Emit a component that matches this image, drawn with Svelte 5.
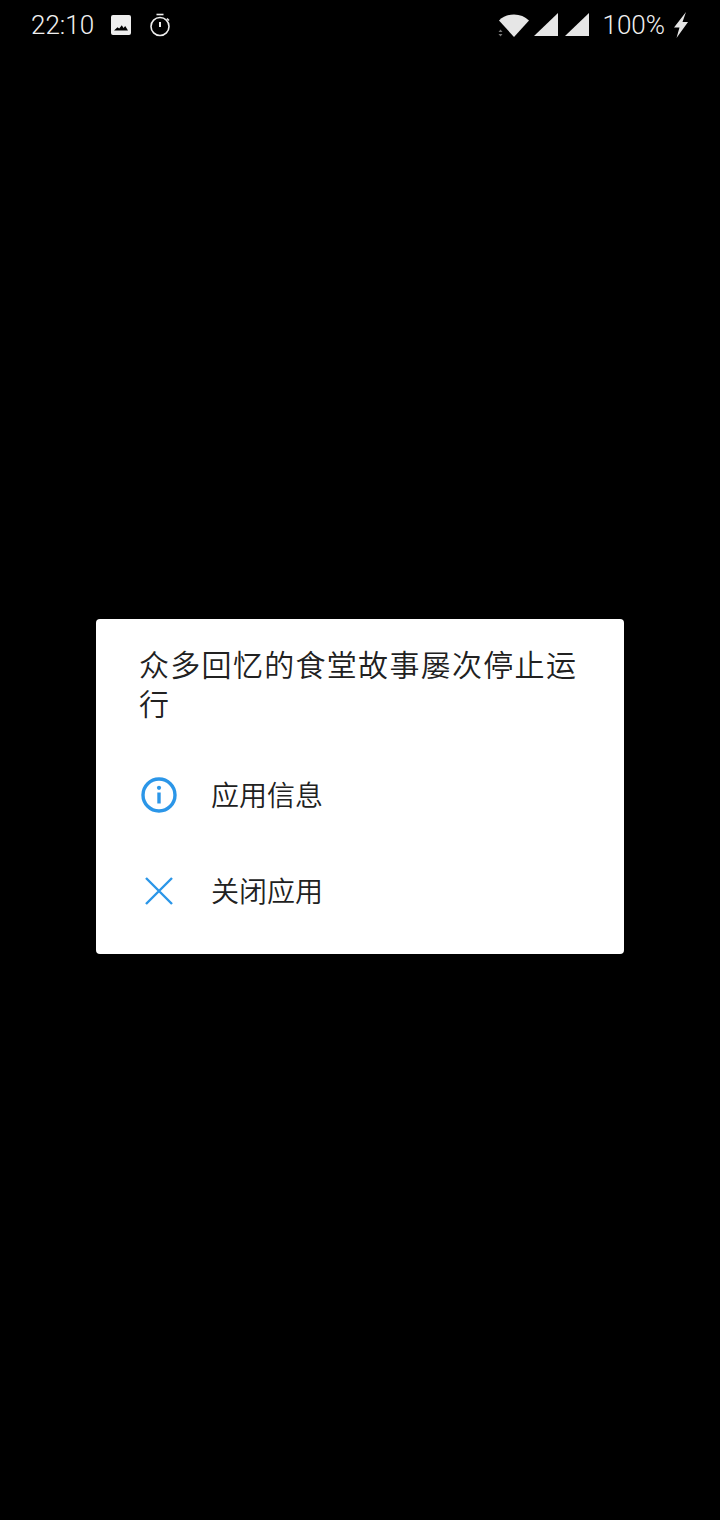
<script>
  const actions = [
    { id: "info", label: "应用信息" },
    { id: "close", label: "关闭应用" },
  ];
</script>

<div class="page">
  <header class="status">
    <span class="time">22:10</span>
    <svg class="ic-image" viewBox="0 0 20 20" width="20" height="20">
      <path fill="#eeeeee" fill-rule="evenodd" d="M2 0h16a2 2 0 0 1 2 2v16a2 2 0 0 1-2 2H2a2 2 0 0 1-2-2V2a2 2 0 0 1 2-2zM3 15.500h14l-2.800-4.500-1.700 2-1.700-2.800-2.600 3.300-1.700-1.300z" />
    </svg>
    <svg class="ic-timer" viewBox="0 0 22 24" width="22" height="24">
      <circle cx="11" cy="13.500" r="9" fill="none" stroke="#eeeeee" stroke-width="1.600" />
      <path d="M7.500 1.500h7" fill="none" stroke="#eeeeee" stroke-width="1.600" />
      <path d="M11 9v5" fill="none" stroke="#eeeeee" stroke-width="2" />
      <path d="M18 5.500l2 2" fill="none" stroke="#eeeeee" stroke-width="1.500" />
    </svg>
    <span class="spacer"></span>
    <svg class="ic-wifi" viewBox="0 0 32 24" width="32" height="24">
      <path fill="#e6e6e6" d="M1 7.500C5 3.500 10 1.500 16 1.500s11 2 15 6L16 24z" />
      <path fill="#777777" d="M0.500 19l2-2.500 2 2.500zM0.500 21l2 2.500 2-2.500z" />
    </svg>
    <svg class="ic-signal" viewBox="0 0 24 24" width="24" height="24">
      <path fill="#e6e6e6" d="M0 23L24 0v23z" />
    </svg>
    <svg class="ic-signal two" viewBox="0 0 24 24" width="24" height="24">
      <path fill="#e6e6e6" d="M0 23L24 0v23z" />
    </svg>
    <span class="battery">100%</span>
    <svg class="ic-bolt" viewBox="0 0 16 26" width="16" height="26">
      <path fill="#e6e6e6" d="M13 0L1 15.500h5.500L3.500 26 15 10H9.500z" />
    </svg>
  </header>

  <main class="center">
    <div class="dialog">
      <h1>众多回忆的食堂故事屡次停止运行</h1>
      {#each actions as action (action.id)}
        <button class="row">
          <span class="icon">
            {#if action.id === "info"}
              <svg viewBox="0 0 36 36" width="36" height="36">
                <circle cx="18" cy="18" r="16" fill="none" stroke="#2b96e8" stroke-width="3.400" />
                <path d="M18 15.500v11" stroke="#2b96e8" stroke-width="3.400" />
                <circle cx="18" cy="10.800" r="2.100" fill="#2b96e8" />
              </svg>
            {:else}
              <svg viewBox="0 0 36 36" width="36" height="36">
                <path d="M5 5l26 26M31 5L5 31" stroke="#2b96e8" stroke-width="2.400" fill="none" />
              </svg>
            {/if}
          </span>
          <span class="label">{action.label}</span>
        </button>
      {/each}
    </div>
  </main>
</div>

<style>
  :global(body) {
    background: #000;
  }

  .page {
    height: 1520px;
    display: flex;
    flex-direction: column;
    background: #000;
  }

  .status {
    height: 50px;
    display: flex;
    align-items: center;
    padding: 0 31px 0 31px;
    color: #f0f0f0;
    font-family: Roboto, "Liberation Sans", sans-serif;
    font-size: 26px;
    font-weight: 300;
    box-sizing: border-box;
  }

  .ic-image {
    margin-left: 17px;
  }

  .ic-timer {
    margin-left: 18px;
  }

  .spacer {
    flex: 1;
  }

  .ic-signal {
    margin-left: 4px;
  }

  .ic-signal.two {
    margin-left: 7px;
  }

  .battery {
    margin-left: 14px;
  }

  .ic-bolt {
    margin-left: 8px;
  }

  .center {
    flex: 1;
    display: flex;
    justify-content: center;
    align-items: flex-start;
    padding-top: 569px;
  }

  .dialog {
    width: 528px;
    height: 335px;
    box-sizing: border-box;
    padding-top: 25px;
    background: #fff;
    border-radius: 4px;
    font-family: "Noto Sans CJK SC", sans-serif;
    color: #212121;
  }

  h1 {
    margin: 0 0 25px;
    padding: 0 43px;
    font-size: 30px;
    font-weight: 350;
    line-height: 39px;
    letter-spacing: 1.300px;
  }

  .row {
    display: flex;
    align-items: center;
    width: 100%;
    height: 96px;
    padding: 0 0 0 45px;
    border: none;
    background: none;
    font: inherit;
    color: inherit;
    text-align: left;
  }

  .icon {
    width: 36px;
    height: 36px;
    display: flex;
    margin-right: 34px;
  }

  .label {
    font-size: 28px;
    font-weight: 350;
    line-height: 36px;
    padding-bottom: 2px;
  }
</style>
